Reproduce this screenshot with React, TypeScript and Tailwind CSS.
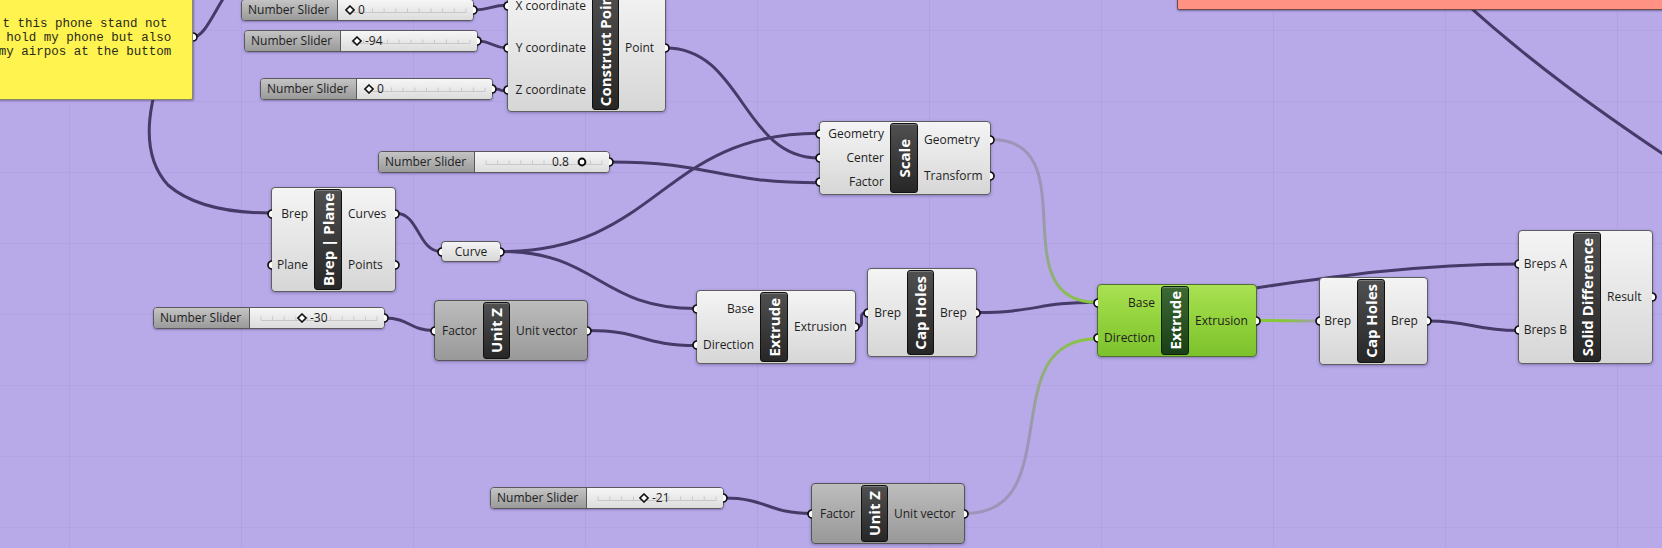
import React from 'react';

type Tone = 'light' | 'gray' | 'green';

type NodeDef = {
  id: string;
  x: number;
  y: number;
  w: number;
  h: number;
  inW: number;
  band: number;
  title: string;
  inputs: string[];
  outputs: string[];
  tone?: Tone;
};

type SliderDef = {
  id: string;
  x: number;
  y: number;
  w: number;
  value: string;
  pad: number;
  knob?: 'diamond' | 'circle';
};

const H = 22; // slider height

const nodes: NodeDef[] = [
  { id: 'cp', x: 507, y: -16, w: 159, h: 128, inW: 85, band: 27, title: 'Construct Point', inputs: ['X coordinate', 'Y coordinate', 'Z coordinate'], outputs: ['Point'] },
  { id: 'scale', x: 819, y: 121, w: 172, h: 74, inW: 71, band: 28, title: 'Scale', inputs: ['Geometry', 'Center', 'Factor'], outputs: ['Geometry', 'Transform'] },
  { id: 'bp', x: 271, y: 187, w: 125, h: 105, inW: 43, band: 28, title: 'Brep | Plane', inputs: ['Brep', 'Plane'], outputs: ['Curves', 'Points'] },
  { id: 'uz1', x: 434, y: 300, w: 154, h: 61, inW: 49, band: 27, title: 'Unit Z', inputs: ['Factor'], outputs: ['Unit vector'], tone: 'gray' },
  { id: 'ext1', x: 696, y: 290, w: 160, h: 74, inW: 64, band: 28, title: 'Extrude', inputs: ['Base', 'Direction'], outputs: ['Extrusion'] },
  { id: 'cap1', x: 867, y: 268, w: 110, h: 89, inW: 40, band: 27, title: 'Cap Holes', inputs: ['Brep'], outputs: ['Brep'] },
  { id: 'ext2', x: 1097, y: 284, w: 160, h: 73, inW: 64, band: 28, title: 'Extrude', inputs: ['Base', 'Direction'], outputs: ['Extrusion'], tone: 'green' },
  { id: 'cap2', x: 1319, y: 277, w: 109, h: 88, inW: 38, band: 28, title: 'Cap Holes', inputs: ['Brep'], outputs: ['Brep'] },
  { id: 'sd', x: 1518, y: 230, w: 135, h: 134, inW: 55, band: 28, title: 'Solid Difference', inputs: ['Breps A', 'Breps B'], outputs: ['Result'] },
  { id: 'uz2', x: 811, y: 483, w: 154, h: 61, inW: 50, band: 27, title: 'Unit Z', inputs: ['Factor'], outputs: ['Unit vector'], tone: 'gray' },
];

const sliders: SliderDef[] = [
  { id: 's1', x: 241, y: -1, w: 233, value: '0', pad: 7 },
  { id: 's2', x: 244, y: 30, w: 234, value: '-94', pad: 11 },
  { id: 's3', x: 260, y: 78, w: 233, value: '0', pad: 7 },
  { id: 's08', x: 378, y: 151, w: 232, value: '0.8', pad: 77, knob: 'circle' },
  { id: 's30', x: 153, y: 307, w: 232, value: '-30', pad: 47 },
  { id: 's21', x: 490, y: 487, w: 234, value: '-21', pad: 52 },
];

const curveParam = { x: 441, y: 241, w: 60, h: 21 };

const byId = (id: string) => nodes.find((n) => n.id === id)!;
const sl = (id: string) => sliders.find((s) => s.id === id)!;

const inPt = (id: string, i: number): [number, number] => {
  const n = byId(id);
  return [n.x, n.y + ((i + 0.5) * n.h) / n.inputs.length];
};
const outPt = (id: string, i: number): [number, number] => {
  const n = byId(id);
  return [n.x + n.w, n.y + ((i + 0.5) * n.h) / n.outputs.length];
};
const slOut = (id: string): [number, number] => {
  const s = sl(id);
  return [s.x + s.w, s.y + H / 2];
};
const crvIn: [number, number] = [curveParam.x, curveParam.y + curveParam.h / 2];
const crvOut: [number, number] = [curveParam.x + curveParam.w, curveParam.y + curveParam.h / 2];

function wire(a: [number, number], b: [number, number]) {
  const [x1, y1] = a;
  const [x2, y2] = b;
  const d = Math.max(Math.abs(x2 - x1) * 0.5, Math.abs(y2 - y1) * 0.6, 12);
  return `M ${x1} ${y1} C ${x1 + d} ${y1}, ${x2 - d} ${y2}, ${x2} ${y2}`;
}

const darkWires: string[] = [
  // note and off-screen sources
  'M 193 37 C 204 37, 212 16, 226 -6',
  'M 172 40 C 150 95, 136 150, 168 185 C 192 206, 230 213, 271 213',
  'M 1462 0 C 1530 62, 1600 112, 1672 160',
  // comes out from behind the green Extrude
  'M 1200 296 C 1300 282, 1400 264, 1518 264',
  wire(slOut('s1'), inPt('cp', 0)),
  wire(slOut('s2'), inPt('cp', 1)),
  wire(slOut('s3'), inPt('cp', 2)),
  wire(outPt('cp', 0), inPt('scale', 1)),
  wire(crvOut, inPt('scale', 0)),
  wire(crvOut, inPt('ext1', 0)),
  wire(slOut('s08'), inPt('scale', 2)),
  wire(outPt('bp', 0), crvIn),
  wire(slOut('s30'), inPt('uz1', 0)),
  wire(outPt('uz1', 0), inPt('ext1', 1)),
  wire(outPt('ext1', 0), inPt('cap1', 0)),
  wire(outPt('cap1', 0), inPt('ext2', 0)),
  wire(outPt('cap2', 0), inPt('sd', 1)),
  wire(slOut('s21'), inPt('uz2', 0)),
];

const greenWires: { id: string; a: [number, number]; b: [number, number]; from: string; to: string }[] = [
  { id: 'g1', a: outPt('scale', 0), b: inPt('ext2', 0), from: '#9d94b8', to: '#86c83a' },
  { id: 'g2', a: outPt('uz2', 0), b: inPt('ext2', 1), from: '#9d94b8', to: '#86c83a' },
  { id: 'g3', a: outPt('ext2', 0), b: inPt('cap2', 0), from: '#86c83a', to: '#a39bbb' },
];

function Grip({ side }: { side: 'in' | 'out' }) {
  if (side === 'in') {
    return (
      <svg width="7" height="11" viewBox="0 0 7 11" className="absolute top-1/2 left-[-7px] -translate-y-1/2">
        <path d="M 7 1.5 A 4 4 0 0 0 7 9.5" fill="#fff" stroke="#111" strokeWidth="1.7" />
      </svg>
    );
  }
  return (
    <svg width="7" height="11" viewBox="0 0 7 11" className="absolute top-1/2 right-[-7px] -translate-y-1/2">
      <path d="M 0 1.5 A 4 4 0 0 1 0 9.5" fill="#fff" stroke="#111" strokeWidth="1.7" />
    </svg>
  );
}

function Node({ n }: { n: NodeDef }) {
  const tone = n.tone ?? 'light';
  const body =
    tone === 'green'
      ? 'bg-linear-to-b from-[#a9e152] via-[#92d23c] to-[#7cc22c] border-[#4f6e33]'
      : tone === 'gray'
        ? 'bg-linear-to-b from-[#bdbdbd] via-[#aaaaaa] to-[#999999] border-[#555]'
        : 'bg-linear-to-b from-[#f4f4f4] via-[#e6e6e6] to-[#d6d6d6] border-[#5e5e5e]';
  const band =
    tone === 'green'
      ? 'bg-linear-to-b from-[#3d6a33] to-[#1a3f17] border-[#0d220b]'
      : 'bg-linear-to-b from-[#505050] to-[#272727] border-[#101010]';
  return (
    <div
      className={`absolute flex rounded-[4px] border shadow-[0_1px_3px_rgba(40,30,80,0.35)] font-['Open_Sans',sans-serif] text-[12px] text-[#1e1e1e] ${body}`}
      style={{ left: n.x, top: n.y, width: n.w, height: n.h }}
    >
      <div className="flex flex-col" style={{ width: n.inW - 1 }}>
        {n.inputs.map((p) => (
          <div key={p} className="relative flex flex-1 items-center justify-end pr-[6px] whitespace-nowrap">
            {p}
            <Grip side="in" />
          </div>
        ))}
      </div>
      <div
        className={`my-[1px] flex items-center justify-center overflow-hidden rounded-[3px] border shadow-[inset_0_1px_0_rgba(255,255,255,0.25)] ${band}`}
        style={{ width: n.band }}
      >
        <span className="rotate-180 whitespace-nowrap font-['Open_Sans',sans-serif] text-[15px] font-bold text-white [writing-mode:vertical-rl]">
          {n.title}
        </span>
      </div>
      <div className="flex flex-1 flex-col">
        {n.outputs.map((p) => (
          <div key={p} className="relative flex flex-1 items-center pl-[6px] whitespace-nowrap">
            {p}
            <Grip side="out" />
          </div>
        ))}
      </div>
    </div>
  );
}

function Slider({ s }: { s: SliderDef }) {
  const knob =
    s.knob === 'circle' ? (
      <svg width="10" height="10" viewBox="0 0 10 10">
        <circle cx="5" cy="5" r="3.4" fill="#fff" stroke="#111" strokeWidth="2" />
      </svg>
    ) : (
      <svg width="10" height="10" viewBox="0 0 10 10">
        <path d="M 5 1 L 9 5 L 5 9 L 1 5 Z" fill="#fff" stroke="#111" strokeWidth="1.6" />
      </svg>
    );
  return (
    <div
      className="absolute flex h-[22px] rounded-[4px] border border-[#5a5a5a] shadow-[0_1px_2px_rgba(40,30,80,0.35)] font-['Open_Sans',sans-serif] text-[12px] text-[#1e1e1e]"
      style={{ left: s.x, top: s.y, width: s.w }}
    >
      <div className="flex w-[96px] items-center rounded-l-[3px] border-r border-[#5a5a5a] bg-linear-to-b from-[#c4c4c4] to-[#9a9a9a] pl-[6px] whitespace-nowrap">
        Number Slider
      </div>
      <div className="relative flex flex-1 items-center rounded-r-[3px] bg-linear-to-b from-[#f6f6f6] to-[#dcdcdc]" style={{ paddingLeft: s.pad }}>
        <svg className="absolute top-0 left-0 h-full w-full" preserveAspectRatio="none">
          <line x1="11" y1="12.5" x2={s.w - 105} y2="12.5" stroke="#c8c8c8" strokeWidth="1" />
          {Array.from({ length: 11 }).map((_, i) => {
            const x = 11 + (i * (s.w - 116)) / 10;
            return <line key={i} x1={x} y1="8.5" x2={x} y2="12.5" stroke="#c8c8c8" strokeWidth="1" />;
          })}
        </svg>
        {s.knob === 'circle' ? (
          <span className="relative flex items-center gap-[8px]">
            {s.value}
            {knob}
          </span>
        ) : (
          <span className="relative flex items-center gap-[3px]">
            {knob}
            {s.value}
          </span>
        )}
      </div>
      <Grip side="out" />
    </div>
  );
}

export default function App() {
  const gridX = Array.from({ length: 10 }, (_, k) => 69 + k * 172);
  const gridY = Array.from({ length: 8 }, (_, k) => 30 + k * 71);

  return (
    <div className="relative h-[548px] w-[1662px] overflow-hidden bg-[#b8a9e8]">
      {/* grid + wires */}
      <svg className="absolute top-0 left-0" width="1662" height="548">
        <defs>
          {greenWires.map((g) => (
            <linearGradient key={g.id} id={g.id} gradientUnits="userSpaceOnUse" x1={g.a[0]} y1={g.a[1]} x2={g.b[0]} y2={g.b[1]}>
              <stop offset="0" stopColor={g.from} />
              <stop offset="0.45" stopColor={g.from} />
              <stop offset="1" stopColor={g.to} />
            </linearGradient>
          ))}
        </defs>
        {gridX.map((x) => (
          <line key={`gx${x}`} x1={x + 0.5} y1="0" x2={x + 0.5} y2="548" stroke="#b0a1e2" strokeWidth="1" />
        ))}
        {gridY.map((y) => (
          <line key={`gy${y}`} x1="0" y1={y + 0.5} x2="1662" y2={y + 0.5} stroke="#b2a3e3" strokeWidth="1" />
        ))}
        {darkWires.map((d, i) => (
          <path key={i} d={d} fill="none" stroke="#463a68" strokeWidth="3" strokeLinecap="round" />
        ))}
        {greenWires.map((g) => (
          <path key={g.id} d={wire(g.a, g.b)} fill="none" stroke={`url(#${g.id})`} strokeWidth="3" strokeLinecap="round" />
        ))}
      </svg>

      {/* scribble note */}
      <div className="absolute top-[-20px] left-[-20px] h-[120px] w-[213px] overflow-hidden rounded-[2px] border border-[#8c8a5c] bg-[#fff350] shadow-[1px_1px_2px_rgba(40,30,80,0.4)]">
        <div className="ml-[-20px] w-[248px] pt-[36px] text-center font-['Liberation_Mono',monospace] text-[12.5px] leading-[14px] whitespace-pre text-[#2a2a1a]">
          <div>t this phone stand not</div>
          <div> hold my phone but also</div>
          <div>my airpos at the buttom</div>
        </div>
      </div>
      <div className="absolute top-[37px] left-[193px]">
        <svg width="7" height="11" viewBox="0 0 7 11" className="absolute top-0 left-0 -translate-y-1/2">
          <path d="M 0 1.5 A 4 4 0 0 1 0 9.5" fill="#fff" stroke="#111" strokeWidth="1.7" />
        </svg>
      </div>

      {/* panel at the top right */}
      <div className="absolute top-[-30px] left-[1177px] h-[40px] w-[500px] rounded-[2px] border border-[#6e4b45] bg-[#ff9282] shadow-[0_1px_2px_rgba(40,30,80,0.45)]" />

      {sliders.map((s) => (
        <Slider key={s.id} s={s} />
      ))}

      {/* Curve parameter */}
      <div
        className="absolute flex items-center justify-center rounded-[4px] border border-[#5a5a5a] bg-linear-to-b from-[#f4f4f4] to-[#d8d8d8] font-['Open_Sans',sans-serif] text-[12px] text-[#1e1e1e] shadow-[0_1px_2px_rgba(40,30,80,0.35)]"
        style={{ left: curveParam.x, top: curveParam.y, width: curveParam.w, height: curveParam.h }}
      >
        Curve
        <Grip side="in" />
        <Grip side="out" />
      </div>

      {nodes.map((n) => (
        <Node key={n.id} n={n} />
      ))}
    </div>
  );
}
